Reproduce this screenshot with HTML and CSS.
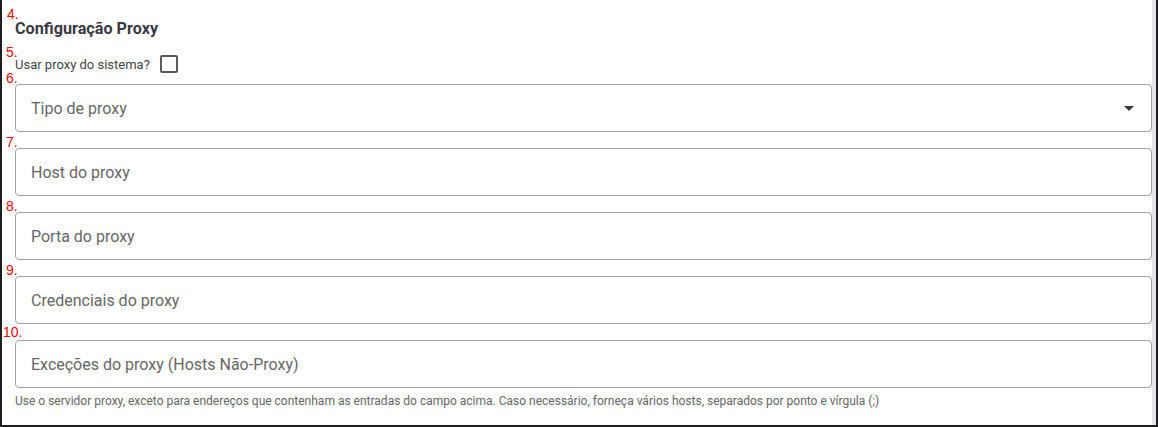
FILE: index.html
```html
<!DOCTYPE html>
<html lang="pt-BR">
<head>
    <meta charset="UTF-8">
    <title>Configuração Proxy</title>
    <link rel="stylesheet" href="styles.css">
</head>
<body>
    <div class="panel">
        <div class="panel-inner">
            <h3 class="section-title">Configuração Proxy</h3>

            <label class="check-row">
                <span>Usar proxy do sistema?</span>
                <span class="checkbox"></span>
            </label>

            <div class="fields">
                <div class="field select">
                    <span class="field-label">Tipo de proxy</span>
                    <span class="arrow"></span>
                </div>
                <div class="field"><span class="field-label">Host do proxy</span></div>
                <div class="field"><span class="field-label">Porta do proxy</span></div>
                <div class="field"><span class="field-label">Credenciais do proxy</span></div>
                <div class="field"><span class="field-label">Exceções do proxy (Hosts Não-Proxy)</span></div>
            </div>

            <p class="helper">Use o servidor proxy, exceto para endereços que contenham as entradas do campo acima. Caso necessário, forneça vários hosts, separados por ponto e vírgula (;)</p>
        </div>

        <!-- step markers -->
        <span class="marker m4">4.</span>
        <span class="marker m5">5.</span>
        <span class="marker m6">6.</span>
        <span class="marker m7">7.</span>
        <span class="marker m8">8.</span>
        <span class="marker m9">9.</span>
        <span class="marker m10">10.</span>
    </div>
</body>
</html>
```

FILE: styles.css
```css
body {
    margin: 0;
    font-family: Roboto, "Liberation Sans", Arial, sans-serif;
    background: #fff;
}
.panel {
    position: relative;
    width: 1158px;
    height: 427px;
    box-sizing: border-box;
    border: solid #1e1e1e;
    border-width: 0 2px 2px 2px;
}
.panel-inner {
    height: 100%;
    box-sizing: border-box;
    padding-left: 13px;
    border-right: 4px solid #e4e4ec;
    display: flex;
    flex-direction: column;
}
.section-title {
    margin: 19px 0 0;
    font-size: 16.2px;
    line-height: 20px;
    font-weight: bold;
    color: #3a3a42;
}
.check-row {
    margin-top: 16px;
    display: flex;
    align-items: center;
    gap: 10px;
    font-size: 13px;
    color: #444;
    height: 18px;
}
.checkbox {
    width: 14px;
    height: 14px;
    border: 2px solid #5a5a5a;
    border-radius: 2px;
}
.fields {
    margin-top: 11px;
    display: flex;
    flex-direction: column;
    gap: 16px;
}
.field {
    height: 48px;
    box-sizing: border-box;
    border: 1px solid #a3a3a3;
    border-radius: 4px;
    display: flex;
    align-items: center;
    padding: 0 15px;
}
.field-label {
    font-size: 16px;
    color: #666;
    flex: 1;
}
.arrow {
    width: 0;
    height: 0;
    border-left: 5px solid transparent;
    border-right: 5px solid transparent;
    border-top: 5px solid #3a3a3a;
    margin-right: 2px;
}
.helper {
    margin: 6px 0 0;
    font-size: 12px;
    line-height: 14px;
    color: #666;
}
.marker {
    position: absolute;
    font-family: "Liberation Sans", Arial, sans-serif;
    font-size: 14px;
    line-height: 14px;
    color: #f00;
}
.m4 { left: 5px; top: 7px; }
.m5 { left: 4px; top: 45px; }
.m6 { left: 4px; top: 71px; }
.m7 { left: 4px; top: 135px; }
.m8 { left: 4px; top: 199px; }
.m9 { left: 4px; top: 263px; }
.m10 { left: 1px; top: 325px; }
```
